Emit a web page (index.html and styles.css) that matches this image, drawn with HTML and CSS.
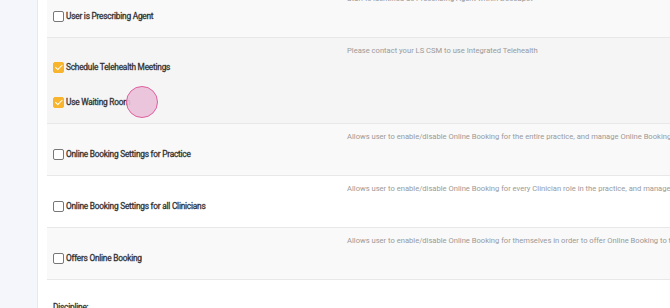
FILE: index.html
```html
<!DOCTYPE html>
<html lang="en">
<head>
    <meta charset="UTF-8">
    <title>Staff Permissions</title>
    <link rel="stylesheet" href="styles.css">
</head>
<body>
    <div class="layout">
        <!-- Barra lateral -->
        <aside class="sidebar"></aside>

        <!-- Panel de permisos -->
        <main class="panel">
            <div class="perm-list">
                <div class="perm-row shade top-row">
                    <div class="perm-options">
                        <label class="perm-option">
                            <span class="box"></span>
                            <span>User is Prescribing Agent</span>
                        </label>
                    </div>
                    <div class="perm-desc">Staff is identified as Prescribing Agent within DoseSpot</div>
                </div>

                <div class="perm-row dark">
                    <div class="perm-options tall">
                        <label class="perm-option">
                            <span class="box checked"></span>
                            <span>Schedule Telehealth Meetings</span>
                        </label>
                        <label class="perm-option">
                            <span class="box checked"></span>
                            <span>Use Waiting Room</span>
                            <span class="cursor-dot"></span>
                        </label>
                    </div>
                    <div class="perm-desc">Please contact your LS CSM to use Integrated Telehealth</div>
                </div>

                <div class="perm-row shade">
                    <div class="perm-options">
                        <label class="perm-option">
                            <span class="box"></span>
                            <span>Online Booking Settings for Practice</span>
                        </label>
                    </div>
                    <div class="perm-desc">Allows user to enable/disable Online Booking for the entire practice, and manage Online Booking settings</div>
                </div>

                <div class="perm-row">
                    <div class="perm-options">
                        <label class="perm-option">
                            <span class="box"></span>
                            <span>Online Booking Settings for all Clinicians</span>
                        </label>
                    </div>
                    <div class="perm-desc">Allows user to enable/disable Online Booking for every Clinician role in the practice, and manage their settings</div>
                </div>

                <div class="perm-row shade">
                    <div class="perm-options">
                        <label class="perm-option">
                            <span class="box"></span>
                            <span>Offers Online Booking</span>
                        </label>
                    </div>
                    <div class="perm-desc">Allows user to enable/disable Online Booking for themselves in order to offer Online Booking to their clients</div>
                </div>
            </div>

            <div class="field-label">Discipline:</div>
        </main>
    </div>
</body>
</html>
```

FILE: styles.css
```css
/* Estilos generales */
body {
    margin: 0;
    font-family: Roboto, "Liberation Sans", Arial, sans-serif;
    background: #f4f6fb;
    color: #333333;
    overflow: hidden;
}

.layout {
    display: flex;
    height: 308px;
}

.sidebar {
    width: 37px;
    flex-shrink: 0;
    background: #f4f6fb;
}

/* Panel principal */
.panel {
    flex: 1;
    background: #ffffff;
    border-left: 1px solid #e6e8ec;
    padding-left: 9px;
    white-space: nowrap;
    overflow: hidden;
}

.perm-row {
    display: flex;
    background: #ffffff;
    border-bottom: 1px solid #e8e8e8;
}

.perm-row.shade {
    background: #f9f9f9;
}

.perm-row.dark {
    background: #f5f5f5;
}

.top-row {
    margin-top: -14px;
}

.perm-options {
    width: 294px;
    flex-shrink: 0;
    padding: 24px 0 0 6px;
    height: 27px;
    box-sizing: content-box;
}

.perm-options.tall {
    height: 62px;
    padding-top: 23px;
    display: flex;
    flex-direction: column;
    gap: 23px;
}

.top-row .perm-options {
    padding-top: 24px;
    height: 27px;
}

.perm-option {
    display: flex;
    align-items: center;
    gap: 2px;
    font-size: 8.3px;
    letter-spacing: -0.22px;
    -webkit-text-stroke: 0.3px #333;
    color: #333;
    position: relative;
    height: 12px;
}

.box {
    width: 9px;
    height: 9px;
    border: 1.5px solid #777777;
    border-radius: 2px;
    background: #ffffff;
    position: relative;
}

.box.checked {
    background: #f8b42c;
    border-color: #f8b42c;
}

.box.checked::after {
    content: "";
    position: absolute;
    left: 2.5px;
    top: 0px;
    width: 3px;
    height: 5.5px;
    border: solid #ffffff;
    border-width: 0 1.2px 1.2px 0;
    transform: rotate(45deg);
}

.perm-desc {
    padding-top: 8px;
    font-size: 7.6px;
    color: #9a9a9a;
}

.top-row .perm-desc {
    padding-top: 8px;
}

/* Marca del cursor */
.cursor-dot {
    position: absolute;
    left: 73px;
    top: -10px;
    width: 30px;
    height: 30px;
    border-radius: 50%;
    background: rgba(234, 192, 216, 0.9);
    border: 1.5px solid #e0609e;
}

.field-label {
    padding: 22px 0 0 6px;
    font-size: 8.3px;
    letter-spacing: -0.22px;
    -webkit-text-stroke: 0.3px #333;
    color: #333;
}
```
